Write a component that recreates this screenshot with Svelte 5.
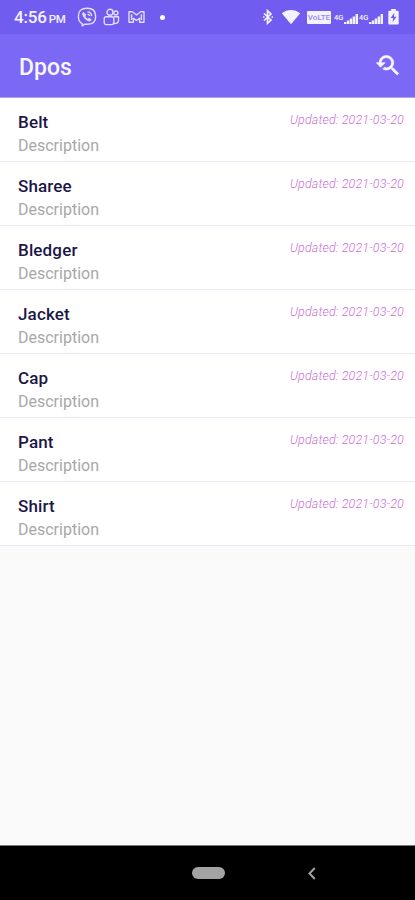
<script lang="ts">
  const items = [
    { name: 'Belt', description: 'Description', updated: '2021-03-20' },
    { name: 'Sharee', description: 'Description', updated: '2021-03-20' },
    { name: 'Bledger', description: 'Description', updated: '2021-03-20' },
    { name: 'Jacket', description: 'Description', updated: '2021-03-20' },
    { name: 'Cap', description: 'Description', updated: '2021-03-20' },
    { name: 'Pant', description: 'Description', updated: '2021-03-20' },
    { name: 'Shirt', description: 'Description', updated: '2021-03-20' }
  ];

  const sims = [1, 2];
</script>

<div class="screen">
  <div class="status-bar">
    <div class="clock">
      <span>4:56</span>
      <small>PM</small>
    </div>

    <div class="notifications">
      <!-- Viber -->
      <svg class="viber" width="20" height="20" viewBox="0 0 20 20">
        <path d="M10 1.3C4 1.3 1.4 3.5 1.4 9.300c0 4 1.200 6.300 3.800 7.300v2.300l2.400-1.800c7.700.7 11-1.400 11-7.800 0-5.800-2.600-8-8.600-8z" />
        <path class="handset" d="M6.400 5c-1.500.9-1.400 2.400-.6 3.900 1.400 2.700 3.300 4.400 5.900 5.400 1.300.4 2.700-.7 2.800-1.900l-2.400-1.700-1.300 1c-1.300-.6-2.100-1.500-2.500-2.800l1.100-1.200z" />
        <path d="M10.400 4.900c2.500.1 4 1.600 4.200 4.200M10.600 7.100c1.100.1 1.700.8 1.800 1.900" />
      </svg>
      <!-- Teams -->
      <svg class="teams" width="17" height="18" viewBox="0 0 17 18">
        <circle cx="7" cy="4.300" r="3" />
        <circle cx="12.900" cy="5" r="2" />
        <rect x="1.200" y="8.800" width="9.600" height="7.800" rx="2" />
        <path d="M10.800 8.800h4.700v3.700c0 2-1.600 3.200-4.700 3" />
      </svg>
      <!-- Gmail -->
      <svg class="gmail" width="17" height="14" viewBox="0 0 17 14">
        <path d="M1 1.800h3.400l4.100 3.200 4.100-3.200H16v10.400h-4.400V8.300L8.500 10.500 5.400 8.300v3.900H1zM3.600 4.200v5.800M13.400 4.200v5.800" />
      </svg>
      <span class="dot"></span>
    </div>

    <div class="system">
      <svg class="bluetooth" width="12" height="16" viewBox="0 0 12 16">
        <path d="M2 4.500l7 6.500-3.500 3.300V1.700L9 5l-7 6.500" />
        <path d="M1 8h1.500M9.500 8H11" />
      </svg>
      <svg class="wifi" width="20" height="16" viewBox="0 0 20 16">
        <path d="M.8 4.300C6-.2 14-.2 19.200 4.300L10 15.300z" />
      </svg>
      <span class="volte">VoLTE</span>
      {#each sims as sim (sim)}
        <span class="sim">
          <span class="network">4G</span>
          <svg class="signal" width="14" height="10" viewBox="0 0 14 10">
            <path d="M0 8h2.400v2H0zM2.900 6.500h2.400V10H2.900zM5.800 4.500h2.400V10H5.800zM8.700 2.500h2.400V10H8.700zM11.600 0H14v10h-2.400z" />
          </svg>
        </span>
      {/each}
      <svg class="battery" width="11" height="16" viewBox="0 0 11 16">
        <path d="M3.200 0h4.600v1.700h2.100c.5 0 .8.300.8.800v12.200c0 .5-.3.800-.8.800H1.100c-.5 0-.8-.3-.8-.8V2.500c0-.5.300-.8.800-.8h2.100z" />
        <path class="bolt" d="M6.300 3.800L2.600 9.100h2.500l-.5 4.200 3.900-5.500H6z" />
      </svg>
    </div>
  </div>

  <header class="app-bar">
    <h1>Dpos</h1>
    <button aria-label="Search history">
      <svg width="27" height="27" viewBox="0 0 24 24">
        <path d="M17.01 14h-.8l-.27-.27c.98-1.14 1.57-2.61 1.57-4.23 0-3.59-2.91-6.5-6.5-6.5s-6.5 3-6.5 6.5H2l3.84 4 4.16-4H6.51C6.51 7 8.53 5 11.01 5s4.5 2.01 4.5 4.5c0 2.48-2.02 4.5-4.5 4.5-.65 0-1.26-.14-1.82-.38L7.71 15.1c.97.57 2.09.9 3.3.9 1.61 0 3.08-.59 4.22-1.57l.27.27v.79l5.01 4.99L22 19l-4.99-5z" />
      </svg>
    </button>
  </header>

  <ul class="list">
    {#each items as item}
      <li>
        <div>
          <div class="name">{item.name}</div>
          <div class="description">{item.description}</div>
        </div>
        <div class="updated">Updated: {item.updated}</div>
      </li>
    {/each}
  </ul>

  <nav class="nav-bar">
    <span></span>
    <span class="home"></span>
    <svg width="8" height="13" viewBox="0 0 8 13">
      <path d="M6.800 1L1.500 6.500 6.800 12" />
    </svg>
  </nav>
</div>

<style>
  :global(body) {
    margin: 0;
  }

  .screen {
    display: flex;
    flex-direction: column;
    width: 415px;
    height: 900px;
    overflow: hidden;
    background: #fafafa;
    font-family: Roboto, 'Liberation Sans', sans-serif;
  }

  .screen svg {
    display: block;
    flex: none;
  }

  /* Status bar */
  .status-bar {
    display: flex;
    align-items: center;
    flex: none;
    box-sizing: border-box;
    height: 34px;
    padding: 0 16px 0 14px;
    background: #705df0;
    color: #f5f2ff;
  }

  .clock {
    display: flex;
    align-items: baseline;
    gap: 2px;
    width: 63px;
    margin-top: 1px;
    font-size: 17px;
    font-weight: 500;
    line-height: 20px;
    white-space: nowrap;
    letter-spacing: -0.2px;
  }

  .clock small {
    font-size: 11.5px;
  }

  .notifications {
    display: flex;
    align-items: center;
  }

  .notifications svg {
    fill: none;
    stroke: #e2dcff;
    stroke-width: 1.4;
    stroke-linejoin: round;
  }

  .notifications .handset {
    fill: #e2dcff;
    stroke: none;
  }

  .teams {
    margin-left: 6px;
  }

  .gmail {
    margin-left: 8px;
  }

  .dot {
    width: 5px;
    height: 5px;
    margin-left: 15px;
    border-radius: 50%;
    background: #fff;
  }

  .system {
    display: flex;
    align-items: center;
    margin-left: auto;
    fill: #f5f2ff;
  }

  .bluetooth {
    fill: none;
    stroke: #f5f2ff;
    stroke-width: 1.7;
  }

  .wifi {
    margin-left: 7px;
  }

  .volte {
    width: 24px;
    height: 13px;
    margin: 1px 3px 0 6px;
    border-radius: 1px;
    background: #f5f2ff;
    color: #9488ea;
    font-size: 8px;
    font-weight: 500;
    line-height: 13px;
    text-align: center;
  }

  .sim {
    display: flex;
    align-items: flex-end;
    width: 25px;
    height: 14px;
  }

  .network {
    width: 10px;
    align-self: center;
    font-size: 7.5px;
    font-weight: 500;
    line-height: 9px;
  }

  .battery {
    margin-left: 4px;
  }

  .bolt {
    fill: #705df0;
  }

  /* App bar */
  .app-bar {
    display: flex;
    align-items: center;
    justify-content: space-between;
    flex: none;
    box-sizing: border-box;
    height: 64px;
    padding: 0 14px 0 19px;
    border-bottom: 1px solid #a99ef2;
    background: #7b68f4;
    color: #f8f6ff;
  }

  h1 {
    margin: 5px 0 0;
    font-size: 23px;
    font-weight: 500;
    line-height: 28px;
  }

  button {
    padding: 0;
    border: 0;
    background: none;
    fill: #f8f6ff;
    stroke: #f8f6ff;
    stroke-width: 0.5;
  }

  /* List */
  .list {
    flex: 1;
    margin: 0;
    padding: 0;
    list-style: none;
  }

  li {
    display: flex;
    justify-content: space-between;
    box-sizing: border-box;
    height: 64px;
    padding: 13px 11px 0 18px;
    border-bottom: 1px solid #e9e9f3;
    background: #fff;
  }

  .name {
    color: #1c1746;
    font-size: 17px;
    font-weight: 500;
    line-height: 22px;
    letter-spacing: 0.15px;
  }

  .description {
    margin-top: 1px;
    color: #a8a8a8;
    font-size: 16px;
    line-height: 24px;
  }

  .updated {
    color: #c76fd6;
    font-size: 12.5px;
    font-style: italic;
    font-weight: 300;
    line-height: 17px;
    letter-spacing: 0.15px;
  }

  /* Navigation bar */
  .nav-bar {
    display: grid;
    grid-template-columns: 1fr 1fr 1fr;
    align-items: center;
    justify-items: center;
    flex: none;
    box-sizing: border-box;
    height: 55px;
    padding: 0 51px 0 53px;
    border-top: 1px solid #777;
    background: #000;
  }

  .home {
    width: 33px;
    height: 12px;
    border-radius: 6px;
    background: #a3a3a3;
  }

  .nav-bar path {
    fill: none;
    stroke: #a3a3a3;
    stroke-width: 2;
  }
</style>
